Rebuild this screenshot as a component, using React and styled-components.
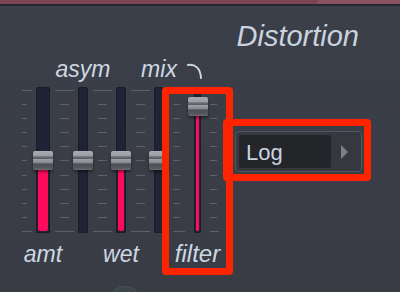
import React from 'react'
import styled, { createGlobalStyle } from 'styled-components'

const GlobalStyle = createGlobalStyle`
  html, body { margin: 0; padding: 0; background: #3a3e48; }
  body { font-family: "Liberation Sans", Arial, sans-serif; }
`

const Page = styled.div`
  width: 400px;
  height: 292px;
  overflow: hidden;
  background: linear-gradient(180deg, #3b3f49 0%, #393c45 100%);
  display: flex;
  flex-direction: column;
`

const TopBar = styled.div`
  height: 4px;
  background: linear-gradient(100deg, #7a4553 0%, #7a4553 79%, #86525f 79.5%, #86525f 100%);
  border-bottom: 2px solid #26282d;
  flex-shrink: 0;
`

const Main = styled.div`
  display: flex;
  flex: 1;
`

const Bank = styled.div`
  display: flex;
  align-items: flex-start;
  padding: 51px 0 0 22px;
  width: 213px;
  flex-shrink: 0;
`

const Channel = styled.div`
  position: relative;
  width: ${p => p.$w}px;
  display: flex;
  flex-direction: column;
  align-items: center;

  ${p => p.$marked && `
    &::after {
      content: '';
      position: absolute;
      top: 30px;
      bottom: -9px;
      left: -32px;
      right: -32px;
      border: 7px solid #ff2400;
      border-radius: 4px;
      pointer-events: none;
    }
  `}
`

const Label = styled.div`
  height: 24px;
  line-height: 24px;
  font-size: ${p => p.$size || 23}px;
  font-style: italic;
  color: #cdd8e3;
  white-space: nowrap;
  display: flex;
  align-items: center;
`

const Mark = styled.svg`
  align-self: flex-start;
  margin: 6px -26px 0 10px;
  flex-shrink: 0;
`

const Track = styled.div`
  position: relative;
  width: 100%;
  height: 146px;
  margin: 6px 0 9px;
  background: #1f2335;
  border-radius: 3px 3px 2px 2px;
  box-shadow: inset 0 0 0 1px #191c28;
`

const Fill = styled.div`
  position: absolute;
  left: 2px;
  right: 2px;
  bottom: 2px;
  background: #ff0b5c;
  border-radius: 0 0 2px 2px;
`

const Handle = styled.div`
  position: absolute;
  left: 50%;
  width: 20px;
  height: 19px;
  margin-left: -10px;
  border-radius: 2px;
  background: linear-gradient(
    180deg,
    #a9acb1 0%,
    #9a9da2 26%,
    #6d7076 30%,
    #5b5e64 40%,
    #9c9fa4 44%,
    #84878c 62%,
    #4c4f55 68%,
    #55585e 90%,
    #6a6d72 100%
  );
  box-shadow: 0 2px 3px rgba(0, 0, 0, 0.45);
`

const Ticks = styled.div`
  width: ${p => p.$w}px;
  height: 142px;
  margin-top: 33px;
  padding-left: ${p => p.$inset || 0}px;
  box-sizing: border-box;
  display: flex;
  flex-direction: column;
  justify-content: space-between;
  align-items: ${p => (p.$center ? 'center' : 'flex-start')};
  flex-shrink: 0;
`

const Dash = styled.div`
  width: ${p => p.$len}px;
  height: 1px;
  background: #5b606b;
`

const Side = styled.div`
  display: flex;
  flex-direction: column;
  align-items: flex-end;
  padding-top: 15px;
  width: 127px;
`

const Title = styled.div`
  font-size: 29px;
  line-height: 30px;
  font-style: italic;
  color: #c9d3de;
  padding-right: 3px;
`

const Marked = styled.div`
  position: relative;
  margin-top: 80px;

  &::after {
    content: '';
    position: absolute;
    top: -12px;
    bottom: -9px;
    left: -12px;
    right: -9px;
    border: 7px solid #ff2400;
    border-radius: 4px;
    pointer-events: none;
  }
`

const Select = styled.div`
  width: 127px;
  height: 41px;
  box-sizing: border-box;
  padding: 3px;
  display: flex;
  border: 1px solid #53575f;
  border-radius: 4px;
  background: #35383e;
`

const Field = styled.div`
  flex: 1;
  background: #232529;
  border-radius: 3px;
  color: #c8d4e0;
  font-size: 22px;
  line-height: 35px;
  padding-left: 7px;
`

const Arrow = styled.div`
  width: 27px;
  display: flex;
  align-items: center;
  justify-content: center;

  &::before {
    content: '';
    border-left: 7px solid #7b7f87;
    border-top: 7px solid transparent;
    border-bottom: 7px solid transparent;
  }
`

const KnobRow = styled.div`
  display: flex;
  padding-left: 108px;
  height: 6px;
  flex-shrink: 0;
`

const Knob = styled.div`
  width: 32px;
  height: 32px;
  border-radius: 50%;
  background: #3b464c;
  border: 1px solid #47555c;
  flex-shrink: 0;
`

const Curve = () => (
  <Mark width="16" height="16" viewBox="0 0 16 16">
    <path d="M1 2 C8 1 13.5 5 14 15" fill="none" stroke="#cdd8e3" strokeWidth="2" strokeLinecap="round" />
  </Mark>
)

const TickCol = ({ w, inset, center, short, long }) => (
  <Ticks $w={w} $inset={inset} $center={center}>
    {Array.from({ length: 11 }, (_, i) => (
      <Dash key={i} $len={i === 0 || i === 10 ? long : short} />
    ))}
  </Ticks>
)

const Fader = ({ w, top, bottom, value, marked, size }) => (
  <Channel $w={w} $marked={marked}>
    <Label>{top}</Label>
    <Track>
      {value != null && <Fill style={{ top: value + 19 }} />}
      <Handle style={{ top: value != null ? value : 64 }} />
    </Track>
    <Label $size={size}>{bottom}</Label>
  </Channel>
)

export default function App() {
  return (
    <Page>
      <GlobalStyle />
      <TopBar />
      <Main>
        <Bank>
          <TickCol w={14} short={5} long={10} />
          <Fader w={14} bottom="amt" value={64} />
          <TickCol w={28} center short={9} long={19} />
          <Fader w={10} top="asym" />
          <TickCol w={28} center short={9} long={19} />
          <Fader w={10} bottom="wet" value={64} />
          <TickCol w={28} center short={9} long={19} />
          <Fader w={10} top={<>mix<Curve /></>} />
          <TickCol w={30} inset={9} short={7} long={12} />
          <Fader w={7} bottom="filter" value={10} marked size={24} />
          <TickCol w={16} inset={9} short={7} long={9} />
        </Bank>
        <Side>
          <Title>Distortion</Title>
          <Marked>
            <Select>
              <Field>Log</Field>
              <Arrow />
            </Select>
          </Marked>
        </Side>
      </Main>
      <KnobRow>
        <Knob />
      </KnobRow>
    </Page>
  )
}
